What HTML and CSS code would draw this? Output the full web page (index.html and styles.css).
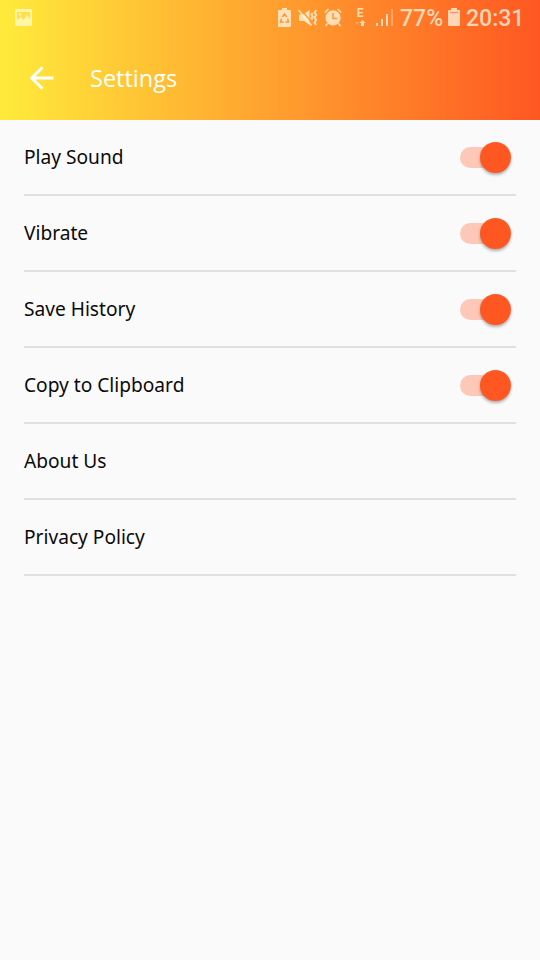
FILE: index.html
```html
<!DOCTYPE html>
<html lang="en">
<head>
<meta charset="utf-8">
<title>Settings</title>
<link rel="stylesheet" href="styles.css">
</head>
<body>
<header class="header">
  <div class="status">
    <svg class="picture" width="18" height="18" viewBox="0 0 18 18"><path fill="currentColor" d="M2 0h15q1 0 1 1v15q0 1-1 1H2q-1 0-1-1V1q0-1 1-1z"/><path class="landscape" d="M3 11V3h13v7l-3-4-3.500 5L7 8z"/><circle cx="6" cy="5.500" r="1.300" fill="currentColor"/></svg>
    <div class="indicators">
      <svg class="saver" width="13" height="19" viewBox="0 0 13 19"><path fill="currentColor" d="M4 0h5v2h3q1 0 1 1v15q0 1-1 1H1q-1 0-1-1V3q0-1 1-1h3z"/><path class="cut" d="M4.300 9 6.500 6l2.200 3M3.300 10.700 2.600 14h3M9.700 10.700l.7 3.300h-3"/></svg>
      <svg class="mute" width="20" height="18" viewBox="0 0 20 18"><path fill="currentColor" d="M1 5.500h4L11.500 1v15L6 12H1z"/><path class="slash-gap" d="M2.500 0l13 15.500"/><path class="line" d="M.5 1l13 15.500"/><path class="wave" d="M14.500 4l-1 1.500 1 2-1 2 1 1.500M18.200 1l-1.700 2.500L18.200 6l-1.700 2.500 1.700 2.500-1.700 2.500 1.700 2.500"/></svg>
      <svg class="alarm" width="18" height="19" viewBox="0 0 18 19"><circle cx="9" cy="9.800" r="7.600" fill="currentColor"/><path class="line" d="M.8 4.500 4.500 1M17.200 4.500 13.500 1M3.500 15.500l-2 2.500M14.500 15.500l2 2.500"/><path class="cut" d="M9 5v5.500h4"/></svg>
      <div class="network">
        <span>E</span>
        <svg width="12" height="6" viewBox="0 0 12 6"><path class="dim" d="M1 2h4L3 5z"/><path fill="currentColor" d="M8.500 0l3 3h-1.500v3H7V3H5.500z"/></svg>
      </div>
      <svg class="signal" width="18" height="17" viewBox="0 0 18 17"><path fill="currentColor" d="M0 14h2v3H0zM5 10h2v7H5zM10 5h2v12h-2z"/><path class="dim" d="M15 0h2v17h-2z"/></svg>
      <span class="percent">77%</span>
      <svg class="battery" width="12" height="19" viewBox="0 0 12 19"><path fill="currentColor" d="M3 0h6v2h2q1 0 1 1v14q0 1-1 1H1q-1 0-1-1V3q0-1 1-1h2z"/><path class="level" d="M2 4.500h8"/></svg>
      <span class="clock">20:31</span>
    </div>
  </div>
  <div class="toolbar">
    <svg class="back" width="24" height="24" viewBox="0 0 24 24"><path d="M23.500 12H2M12.500 1.200 1.700 12l10.800 10.800"/></svg>
    <h1>Settings</h1>
  </div>
</header>
<main class="list">
  <div class="row"><span>Play Sound</span><span class="switch"></span></div>
  <div class="row"><span>Vibrate</span><span class="switch"></span></div>
  <div class="row"><span>Save History</span><span class="switch"></span></div>
  <div class="row"><span>Copy to Clipboard</span><span class="switch"></span></div>
  <div class="row"><span>About Us</span></div>
  <div class="row"><span>Privacy Policy</span></div>
</main>
</body>
</html>
```
FILE: styles.css
```css
* { box-sizing: border-box; }
body {
  margin: 0;
  min-height: 960px;
  background: #fafafa;
  color: #0a0a0a;
  font-family: "Noto Sans", "Open Sans", sans-serif;
}
svg { display: block; flex: none; }
.header {
  height: 120px;
  background: linear-gradient(90deg, #ffeb3b, #ff5722);
  color: #fff;
}
.status {
  height: 36px;
  display: flex;
  justify-content: space-between;
  align-items: center;
  padding: 0 17px 0 14px;
  color: rgba(255, 244, 222, .78);
}
.picture { color: #fff6a8; }
.landscape { fill: #ffe04a; }
.indicators {
  display: flex;
  align-items: center;
  flex: none;
  width: 245px;
  font: 500 23px/36px Roboto, sans-serif;
}
.saver { margin-bottom: 1px; }
.mute { margin-left: 7px; margin-bottom: 1px; }
.alarm { margin-left: 6px; margin-bottom: 1px; }
.network {
  width: 12px;
  margin-left: 12px;
  margin-bottom: 2px;
  display: flex;
  flex-direction: column;
  align-items: center;
  gap: 1px;
  font: 700 12px/11px Roboto, sans-serif;
}
.signal { margin-left: 10px; margin-bottom: 2px; }
.percent { width: 43px; margin-left: 6px; flex: none; }
.percent, .clock { padding-top: 2px; }
.battery { margin-left: 5px; margin-bottom: 1px; }
.clock { margin-left: 6px; }
.line { fill: none; stroke: currentColor; stroke-width: 1.6; }
.wave { fill: none; stroke: currentColor; stroke-width: 2; }
.cut { fill: none; stroke: #ff9636; stroke-width: 1.5; }
.slash-gap { fill: none; stroke: #ff9c35; stroke-width: 1.2; }
.dim { fill: currentColor; opacity: .45; }
.level { stroke: #ff8b60; stroke-width: 1.2; }
.toolbar {
  height: 84px;
  display: flex;
  align-items: center;
  padding-left: 30px;
}
.back { fill: none; stroke: #fff; stroke-width: 3; }
h1 {
  margin: 0 0 0 36px;
  font: 400 23.5px/32px "Open Sans", sans-serif;
}
.list { padding: 0 24px; }
.row {
  height: 76px;
  display: flex;
  align-items: center;
  justify-content: space-between;
  border-bottom: 2px solid #e0e0e0;
  font-size: 19.15px;
  line-height: 26px;
}
.switch {
  width: 48px;
  height: 21px;
  margin-right: 8px;
  border-radius: 11px;
  background: #fdc8b8;
  display: flex;
  align-items: center;
  justify-content: flex-end;
}
.switch::after {
  content: "";
  flex: none;
  width: 31px;
  height: 31px;
  margin-right: -3px;
  border-radius: 50%;
  background: #ff5722;
  box-shadow: 0 2px 3px rgba(0, 0, 0, .3);
}
```
